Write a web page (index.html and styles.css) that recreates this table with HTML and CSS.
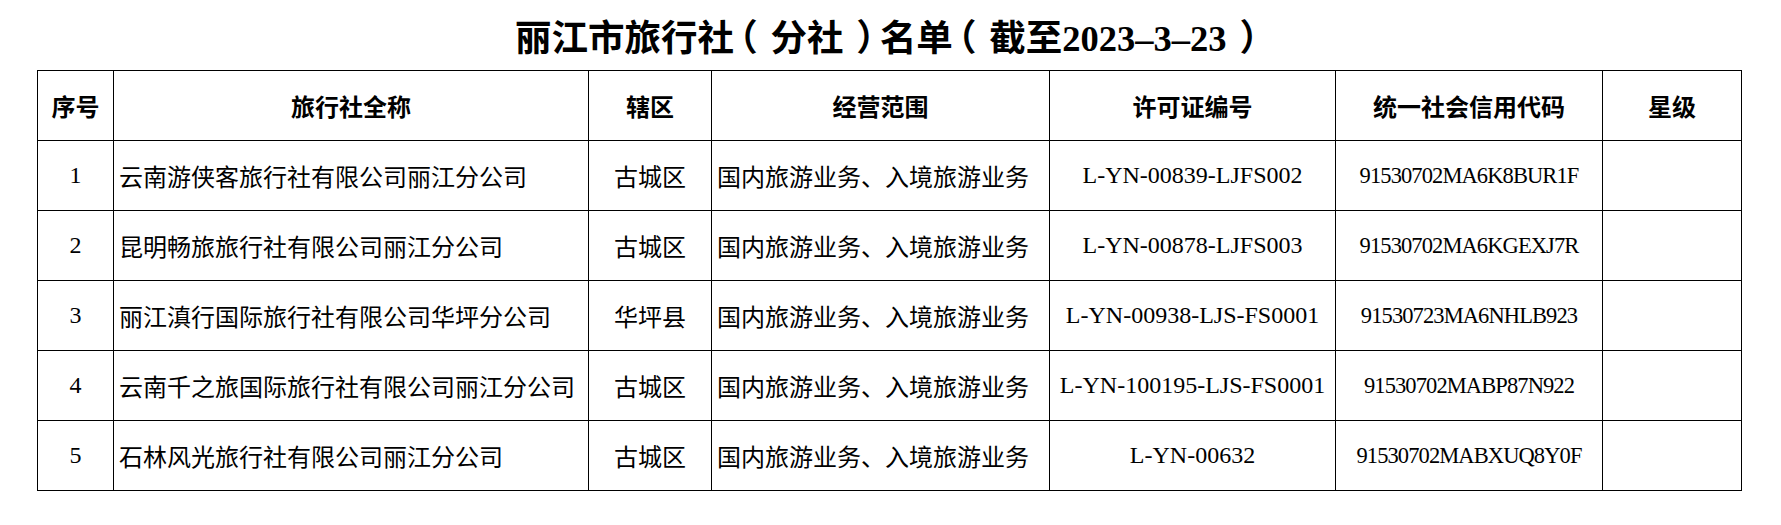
FILE: index.html
```html
<!DOCTYPE html>
<html lang="zh-CN">
<head>
<meta charset="utf-8">
<title>丽江市旅行社（分社）名单</title>
<link rel="stylesheet" href="styles.css">
</head>
<body>
<div class="page">
  <h1 class="title">丽江市旅行社<span class="pl">（</span>分社<span class="pr">）</span>名单<span class="pl">（</span>截至2023–3–23<span class="pr">）</span></h1>
  <table class="list">
    <colgroup>
      <col class="c-no"><col class="c-name"><col class="c-area"><col class="c-scope"><col class="c-permit"><col class="c-credit"><col class="c-star">
    </colgroup>
    <thead>
      <tr><th>序号</th><th>旅行社全称</th><th>辖区</th><th>经营范围</th><th>许可证编号</th><th>统一社会信用代码</th><th>星级</th></tr>
    </thead>
    <tbody>
      <tr><td class="no">1</td><td class="name">云南游侠客旅行社有限公司丽江分公司</td><td class="area">古城区</td><td class="scope">国内旅游业务、入境旅游业务</td><td class="permit">L-YN-00839-LJFS002</td><td class="credit">91530702MA6K8BUR1F</td><td></td></tr>
      <tr><td class="no">2</td><td class="name">昆明畅旅旅行社有限公司丽江分公司</td><td class="area">古城区</td><td class="scope">国内旅游业务、入境旅游业务</td><td class="permit">L-YN-00878-LJFS003</td><td class="credit">91530702MA6KGEXJ7R</td><td></td></tr>
      <tr><td class="no">3</td><td class="name">丽江滇行国际旅行社有限公司华坪分公司</td><td class="area">华坪县</td><td class="scope">国内旅游业务、入境旅游业务</td><td class="permit">L-YN-00938-LJS-FS0001</td><td class="credit">91530723MA6NHLB923</td><td></td></tr>
      <tr><td class="no">4</td><td class="name">云南千之旅国际旅行社有限公司丽江分公司</td><td class="area">古城区</td><td class="scope">国内旅游业务、入境旅游业务</td><td class="permit">L-YN-100195-LJS-FS0001</td><td class="credit">91530702MABP87N922</td><td></td></tr>
      <tr><td class="no">5</td><td class="name">石林风光旅行社有限公司丽江分公司</td><td class="area">古城区</td><td class="scope">国内旅游业务、入境旅游业务</td><td class="permit">L-YN-00632</td><td class="credit">91530702MABXUQ8Y0F</td><td></td></tr>
    </tbody>
  </table>
</div>
</body>
</html>
```
FILE: styles.css
```css
html, body {
  margin: 0;
  padding: 0;
  background: #fff;
}
body {
  font-family: "Liberation Serif", "Noto Sans CJK SC", serif;
  color: #000;
}
.page {
  padding-left: 37px;
  width: 1704px;
}
.title {
  margin: 0;
  height: 70px;
  line-height: 78px;
  font-size: 36.5px;
  font-weight: 700;
  text-align: center;
  white-space: nowrap;
}
.title .pl,
.title .pr {
  font-feature-settings: "halt" 1;
}
.title .pl {
  padding-left: 0.15em;
  padding-right: 0.35em;
}
.title .pr {
  padding-left: 0.35em;
  padding-right: 0.15em;
}
.list {
  border-collapse: collapse;
  table-layout: fixed;
  width: 1704px;
}
.c-no { width: 76px; }
.c-name { width: 475px; }
.c-area { width: 123px; }
.c-scope { width: 338px; }
.c-permit { width: 286px; }
.c-credit { width: 267px; }
.c-star { width: 139px; }
.list th, .list td {
  border: 1px solid #000;
  height: 69px;
  padding: 0 5px;
  font-size: 24px;
  white-space: nowrap;
  overflow: hidden;
  vertical-align: middle;
}
.list th {
  font-weight: 700;
  text-align: center;
}
.list td {
  font-weight: 400;
  text-align: center;
}
.list td.name, .list td.scope {
  text-align: left;
}
.list td.credit {
  font-size: 22.5px;
  letter-spacing: -0.9px;
}
```
